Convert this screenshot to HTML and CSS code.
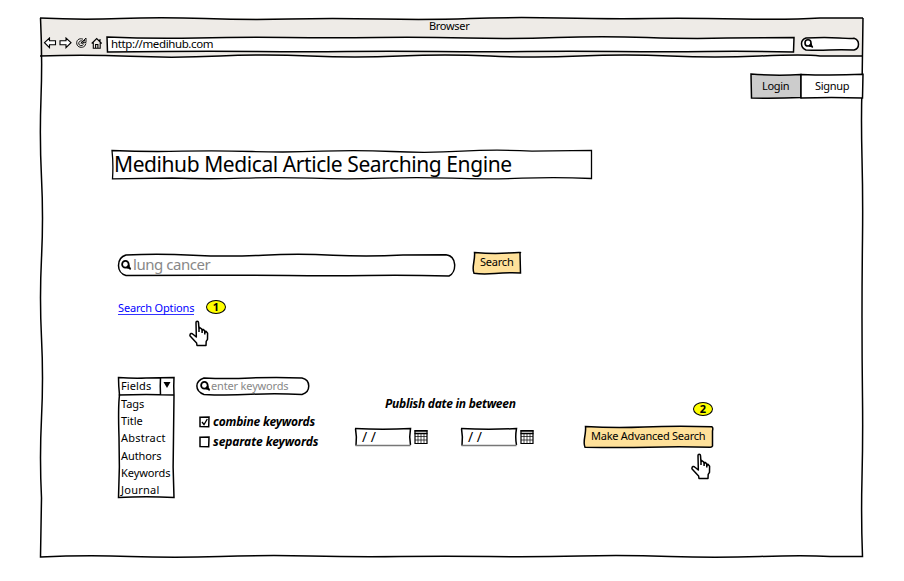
FILE: index.html
```html
<!DOCTYPE html>
<html lang="en">
<head>
<meta charset="utf-8">
<title>Medihub</title>
<link rel="stylesheet" href="styles.css">
</head>
<body>
<svg class="defs" width="0" height="0" aria-hidden="true">
  <symbol id="lens" viewBox="0 0 10 10"><ellipse cx="4" cy="3.900" rx="3" ry="3.100" fill="#fff" stroke="#000" stroke-width="1.600"/><path d="M5.500 5.500 8.800 8.500M5.200 6.900l3.700.6M7 4.500l.7 3.500" fill="none" stroke="#000" stroke-width="1.500"/></symbol>
  <symbol id="hand" viewBox="0 0 20 27"><path d="M7.300 15.800 7 2.600C7 .8 9.400.8 9.500 2.600L10 9.300 10.700 7.500 12.500 8.800 13.200 10.600 14 9.300 15.600 10.600 15.800 12.600 17 11.200 18.600 13.200 18.500 19.300 17.200 21.300 17 25.500 8 25.500 7.600 23 3.400 18.500.9 15.800C.8 13.200 2.800 13 4 14.200L7.300 17z" fill="#fff" stroke="#000" stroke-width="1.500" stroke-linejoin="round"/><path d="M10 9.500v2.500M13.100 10.500v2.500M15.800 12v2.400" stroke="#000" stroke-width="1.500"/></symbol>
  <symbol id="calendar" viewBox="0 0 14 16"><path d="M1 1.500h12v13H1z" fill="#fff" stroke="#000" stroke-width="1.200"/><path d="M.500 2h13M.5 4.500h13" stroke="#000" stroke-width="1.300"/><path d="M1 7.500h12M1 11h12M4 4.500v10M7 4.500v10M10 4.500v10" stroke="#000" stroke-width=".7"/></symbol>
</svg>
<main class="window">
  <header class="chrome">
    <svg class="frame"><path class="chrome-fill" d="M0 0H823V38H0z"/><path d="M0 0Q40 2 80 .5T165 .5T250 1T340 1T430 .5T520 0T610 .5T700 1T780 0L823 0M0 38Q45 36.500 90 38.300T180 38T270 38T360 38T450 38T540 38T630 38T720 38T780 38L823 38"/></svg>
    <div class="caption"><span>Browser</span></div>
    <div class="toolbar">
      <svg class="nav" width="64" height="15" viewBox="0 0 64 15">
        <path class="arrow" d="M1.500 5.700 6.500 1v2.700H12.500v4H6.500V10.700zM28 5.700 23 1v2.700h-6v4h6v3z"/>
        <path class="reload" d="M40 2.200C36 .6 33 3.500 33.800 7S39 11.200 41.500 9.300L43 6.500M39.500 4C37 3.200 35.300 5 35.800 7S39 9.200 40.500 7.500M37.800 6.200 43 5.500V1zM39.500 6.800 41.800 3"/>
        <path d="M48.700 6.500 53.700 1.500l5 5M50.300 5.500v5.700h6.900V5.500M52.600 11V7.500h2.300V11M57 4.200V2"/>
      </svg>
      <div class="url"><svg class="frame"><path d="M0 0Q45 2 90 1T180 .5T270 .5T360 1T450 .5T540 .5T620 1L687 .5 686.500 15Q640 14 600 14.500T510 14.500T420 14.500T330 14.500T240 14.500T150 14.500T60 14.500L.5 15z"/></svg><span>http://medihub.com</span></div>
      <div class="mini-search"><svg class="frame"><path d="M5 1Q25 .2 38 1T53 1.200C59 3 59 11.500 53 13Q40 12.500 28 13T5 13C-1 10.500-1 3 5 1z"/></svg><svg class="lens" width="10" height="10"><use href="#lens"/></svg></div>
    </div>
  </header>
  <svg class="frame outline"><path d="M.5 0Q2.500 40 1 80T1.500 160T1.500 240T1.500 320T1.500 400T1.500 480L.5 539Q45 537 90 538.500T180 538.500T270 538T360 538.500T450 538.500T540 538T630 538.500T720 538.500T790 538.500L822.500 538.500Q821 500 822 460T822.500 380T822 300T822.500 220T822 140T822 70L823 0"/></svg>
  <nav class="tabs">
    <svg class="frame"><path class="tab-on" d="M0 0Q25 2 50 .5L50 23.500Q25 24.500 .5 24z"/><path class="tab-off" d="M50 .5Q80 1.800 112 .3L111.500 24Q80 23 50 24z"/></svg>
    <a class="tab">Login</a><a class="tab signup">Signup</a>
  </nav>
  <h1 class="heading"><svg class="frame"><path d="M0 .5Q35 2 70 1.200T140 1.500T210 1.200T280 1.500T350 1.200T420 1.200L479.500 .3V28.500Q445 27 410 28.200T340 28.200T270 28.200T200 28.200T130 28.200T60 28L.5 28.800Q1.500 14 0 .5z"/></svg><span>Medihub Medical Article Searching Engine</span></h1>
  <form class="search-row">
    <div class="search"><svg class="frame"><path d="M8 1Q40-.5 75 1.200T145 1.200T215 1.200T285 1L328 .7C339 2 339 18 331 22Q290 21 250 21.500T170 21.500T90 21.200T8 21.500C-2 19-2 4 8 1z"/></svg><svg class="lens" width="11" height="11"><use href="#lens"/></svg><span>lung cancer</span></div>
    <button type="button" class="button"><svg class="frame"><path class="gold" d="M1.500.5Q20 2 35 1T47 .8L47.500 21Q35 20.500 22 21.500T1 21.200Q-.5 18 .7 11T1.500.5z"/></svg><span>Search</span></button>
  </form>
  <div class="options"><a class="link">Search Options</a><span class="badge">1</span></div>
  <svg class="pointer first" width="20" height="27"><use href="#hand"/></svg>
  <section class="advanced">
    <div class="fields">
      <svg class="frame"><path d="M.5 .5Q15 1.500 28 1T56 .5Q55.500 9 56 18L55.500 60Q54.500 90 56 120.500Q28 119 .5 120.500 2 90 1 60T1.500 18Q.5 8 .5 .5zM.5 18Q28 17 56 18M42.500 1Q42 9 42.500 18"/><path class="ink" d="M45.500 5h7L49 11z"/></svg>
      <div class="selected">Fields</div>
      <ul><li>Tags</li><li>Title</li><li class="loose">Abstract</li><li>Authors</li><li>Keywords</li><li class="loose">Journal</li></ul>
    </div>
    <div class="keywords">
      <div class="keyword-search"><svg class="frame"><path d="M8 1Q30 2.200 55 1T106 1C115 3 115 15 106 17.500Q80 16 55 17.300T8 17.500C-1.500 14-1.500 4 8 1z"/></svg><svg class="lens" width="11" height="11"><use href="#lens"/></svg><span>enter keywords</span></div>
      <label class="check"><svg width="11" height="12"><path d="M1 1.200 10 1 9.700 10.700 1 10.500z"/><path class="tick" d="M3 6l2 2.500L8.300 3"/></svg><span>combine keywords</span></label>
      <label class="check separate"><svg width="11" height="12"><path d="M1 1.200 10 1 9.700 10.700 1 10.500z"/></svg><span>separate keywords</span></label>
    </div>
    <div class="dates">
      <div class="dates-title"><span>Publish date in between</span></div>
      <div class="date-row">
        <div class="date"><svg class="frame"><path d="M0 .5Q28 2 55.500 .5Q54 9 55.500 17"/><path d="M.5.5Q2 9 1 17.500"/><path class="base" d="M.5 17.500H55.500"/></svg><span>/ /</span></div>
        <svg width="14" height="16"><use href="#calendar"/></svg>
        <div class="date second"><svg class="frame"><path d="M0 .5Q28 2 55.500 .5Q54 9 55.500 17"/><path d="M.5.5Q2 9 1 17.500"/><path class="base" d="M.5 17.500H55.500"/></svg><span>/ /</span></div>
        <svg width="14" height="16"><use href="#calendar"/></svg>
      </div>
    </div>
    <div class="submit">
      <span class="badge">2</span>
      <button type="button" class="button wide"><svg class="frame"><path class="gold" d="M1.500.5Q30 2.200 60 1T127.500.7Q129.500 1 128.500 5L128.500 20Q128 21.300 126 21.200Q95 20.500 65 21.200T1 21.200Q-.5 18 .7 11T1.500.5z"/></svg><span>Make Advanced Search</span></button>
      <svg class="pointer second-hand" width="20" height="27"><use href="#hand"/></svg>
    </div>
  </section>
</main>
</body>
</html>
```
FILE: styles.css
```css
* { box-sizing: border-box; }
body { margin: 0; width: 904px; height: 581px; overflow: hidden; background: #fff; color: #000; font: 11px/16px "Noto Sans", "Open Sans", sans-serif; }
svg { display: block; flex: none; fill: none; stroke: #000; stroke-width: 1.5; }
span { white-space: nowrap; }
.defs { position: absolute; }
.frame { position: absolute; inset: 0; width: 100%; height: 100%; overflow: visible; pointer-events: none; }
.frame ~ * { position: relative; }
.window { position: relative; display: flex; flex-direction: column; margin: 18px 0 0 40px; width: 823px; height: 539px; }
.chrome { position: relative; height: 38px; flex: none; }
.chrome-fill { fill: #eeebe7; stroke: none; }
.caption { height: 19px; padding-left: 389px; letter-spacing: -.3px; }
.toolbar { display: flex; height: 15px; padding-left: 3px; }
.nav { stroke-width: 1.1; }
.arrow { fill: #fff; }
.reload { stroke-width: .9; }
.url { position: relative; width: 687px; padding-left: 4px; line-height: 14px; font-size: 11.5px; letter-spacing: -.38px; }
.url path, .mini-search .frame path { fill: #fff; }
.mini-search { position: relative; width: 58px; margin-left: 7px; padding: 2px 0 0 3px; }
.tabs { display: flex; align-self: flex-end; width: 112px; height: 24px; margin-top: 18px; line-height: 24px; letter-spacing: -.3px; }
.tab { width: 50px; padding-left: 11px; }
.signup { width: 62px; padding-left: 14px; }
.tab-on { fill: #ccc; }
.tab-off { fill: #fff; }
.heading { width: 480px; height: 29px; margin: 52px 0 0 72px; padding-left: 2px; font: 21px/28px "Noto Sans", "Open Sans", sans-serif; letter-spacing: -.42px; }
.heading path { stroke-width: 1.3; }
.search-row { display: flex; height: 24px; margin: 73px 0 0 78px; }
.search { position: relative; display: flex; width: 337px; height: 22px; margin-top: 2px; padding: 0 0 0 3px; font-size: 15px; line-height: 21px; letter-spacing: -.45px; color: #888; }
.search .lens { margin: 6px 1px 0 0; }
.button { position: relative; width: 48px; height: 22px; margin-left: 18px; padding: 0 0 0 7px; border: 0; background: none; color: #000; font: inherit; line-height: 21px; text-align: left; letter-spacing: -.22px; }
.search-row .button span { top: -2px; }
.gold { fill: #ffe19a; }
.options { display: flex; align-items: center; height: 18px; margin: 22px 0 0 78px; }
.link { color: #00f; width: 76px; height: 14px; margin-top: 1px; line-height: 14px; border-bottom: 1px solid #33f; letter-spacing: -.16px; white-space: nowrap; }
.badge { display: block; width: 20px; height: 14px; border: 1.5px solid #000; border-radius: 50%; background: #ff0; font-weight: 700; line-height: 12px; text-align: center; }
.options .badge { margin-left: 12px; }
.pointer.first { margin: 4px 0 0 149px; }
.advanced { display: flex; margin: 30px 0 0 78px; height: 121px; }
.fields { position: relative; width: 56px; padding-left: 3px; }
.selected { height: 19px; line-height: 18px; letter-spacing: .12px; }
ul { list-style: none; margin: 0; padding: 0; }
li { height: 17.2px; line-height: 16px; letter-spacing: -.08px; }
.loose { letter-spacing: .25px; }
.ink { fill: #000; stroke: none; }
.keywords { width: 159px; padding-left: 22px; }
.keyword-search { position: relative; display: flex; width: 114px; height: 18px; padding-left: 4px; line-height: 18px; letter-spacing: -.16px; color: #888; }
.keyword-search .lens { margin: 4px 0 0; }
.check { display: flex; align-items: center; height: 20px; padding-left: 3px; gap: 3px; font-size: 12px; font-weight: 700; font-style: italic; letter-spacing: -.18px; }
.separate { letter-spacing: -.07px; }
.tick { stroke-width: 1.3; }
.keyword-search + .check { margin-top: 17px; }
.dates { width: 251px; padding: 19px 0 0 22px; }
.dates-title { margin-left: 30px; font-size: 12px; font-weight: 700; font-style: italic; letter-spacing: -.26px; }
.date-row { display: flex; align-items: center; gap: 3px; height: 18px; margin-top: 16px; }
.date { position: relative; width: 56px; height: 18px; padding-left: 7px; font-size: 14px; line-height: 17px; }
.date.second { margin-left: 30px; }
.base { stroke: #777; }
.submit { width: 129px; padding-top: 25px; }
.submit .badge { margin-left: 109px; }
.button.wide { display: block; width: 129px; margin: 9.500px 0 0; letter-spacing: -.25px; }
.button.wide span { top: -1px; }
.second-hand { margin: 5.500px 0 0 107px; }
```
